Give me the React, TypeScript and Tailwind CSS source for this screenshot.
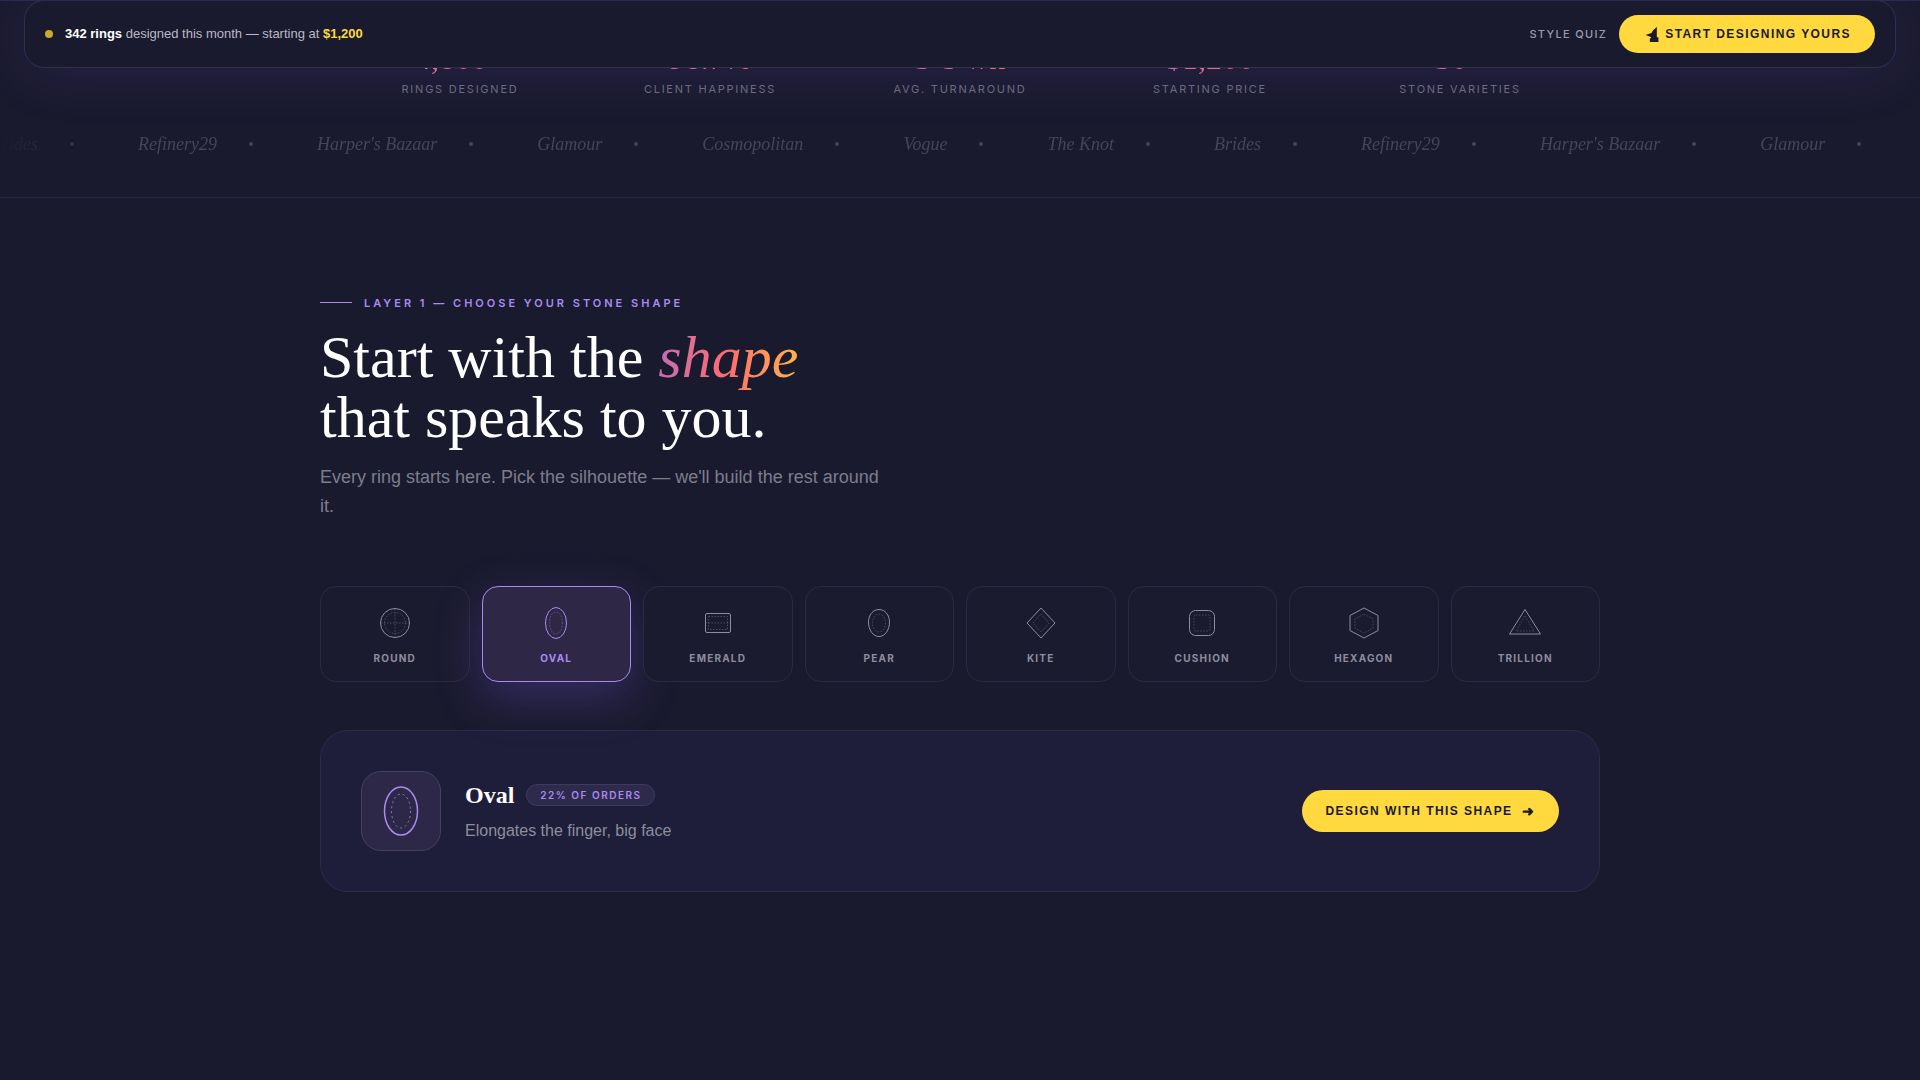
import React from 'react';

const sans = { fontFamily: '"Liberation Sans", Arial, sans-serif' };

const stats = [
  { value: '4,800+', label: 'RINGS DESIGNED' },
  { value: '98.7%', label: 'CLIENT HAPPINESS' },
  { value: '3-5 wk', label: 'AVG. TURNAROUND' },
  { value: '$1,200', label: 'STARTING PRICE' },
  { value: '30+', label: 'STONE VARIETIES' },
];

const press = ['Brides', 'Refinery29', "Harper's Bazaar", 'Glamour', 'Cosmopolitan', 'Vogue', 'The Knot', 'Brides', 'Refinery29', "Harper's Bazaar", 'Glamour'];

function ShapeIcon({ name, active }: { name: string; active: boolean }) {
  const stroke = active ? '#a98bf0' : '#8d8d9e';
  const outer = { fill: 'none', stroke, strokeWidth: 1 };
  const inner = { fill: 'none', stroke, strokeWidth: 0.6, strokeDasharray: '1.5 1.5', opacity: 0.7 };
  return (
    <svg width="40" height="40" viewBox="0 0 40 40">
      {name === 'ROUND' && (
        <>
          <circle cx="20" cy="20" r="14.5" {...outer} />
          <circle cx="20" cy="20" r="10.5" {...inner} />
          <path d="M20 6V34M6 20H34" {...inner} />
        </>
      )}
      {name === 'OVAL' && (
        <>
          <ellipse cx="20" cy="20" rx="10.5" ry="15.5" {...outer} />
          <ellipse cx="20" cy="20" rx="6.5" ry="11" {...inner} />
        </>
      )}
      {name === 'EMERALD' && (
        <>
          <rect x="7.5" y="10.5" width="25" height="19" rx="1.5" {...outer} />
          <rect x="10.5" y="13.5" width="19" height="13" {...inner} />
          <path d="M7.5 20H32.5" {...inner} />
        </>
      )}
      {name === 'PEAR' && (
        <>
          <path d="M20 6.5C26 6.5 30.5 12 30.5 19C30.5 27 26 33.5 20 33.5C14 33.5 9.5 27 9.5 19C9.5 12 14 6.5 20 6.5Z" {...outer} />
          <ellipse cx="20" cy="20" rx="6.5" ry="9" {...inner} />
        </>
      )}
      {name === 'KITE' && (
        <>
          <path d="M20 5L34 20L20 35L6 20Z" {...outer} />
          <path d="M20 11L28 20L20 29L12 20Z" {...inner} />
        </>
      )}
      {name === 'CUSHION' && (
        <>
          <rect x="7.5" y="7.5" width="25" height="25" rx="6" {...outer} />
          <rect x="12" y="12" width="16" height="16" rx="2" {...inner} />
        </>
      )}
      {name === 'HEXAGON' && (
        <>
          <path d="M20 5L34 12.5V27.5L20 35L6 27.5V12.5Z" {...outer} />
          <path d="M20 11L29 16V25L20 30L11 25V16Z" {...inner} />
        </>
      )}
      {name === 'TRILLION' && (
        <>
          <path d="M20 6.5L35.5 31H4.5Z" {...outer} />
          <path d="M20 13L29 28H11Z" {...inner} />
        </>
      )}
    </svg>
  );
}

const shapes = ['ROUND', 'OVAL', 'EMERALD', 'PEAR', 'KITE', 'CUSHION', 'HEXAGON', 'TRILLION'];

export default function App() {
  return (
    <div className="relative h-[1080px] w-full overflow-hidden bg-[#1a1a2e] text-white" style={sans}>
      {/* top nav floats over the scrolled page */}
      <div className="absolute left-0 top-0 z-20 h-px w-full bg-[#2a2a55]" />
      <nav className="absolute left-6 right-6 top-0 z-10 flex h-[68px] items-center justify-between rounded-[20px] border border-[#33304f] bg-[#1a1a2e] pl-5 pr-5 shadow-[0_4px_56px_rgba(124,92,230,0.13)]">
        <div className="flex items-center gap-3 text-[13px] text-[#b9b9c4]">
          <span className="h-2 w-2 rounded-full bg-[#c9ab2e]" />
          <span>
            <b className="font-bold text-white">342 rings</b> designed this month — starting at{' '}
            <b className="font-bold text-[#ffd93d]">$1,200</b>
          </span>
        </div>
        <div className="flex items-center gap-3">
          <span className="text-[11px] font-medium tracking-[0.12em] text-[#9a9aa8]" style={{ fontFamily: 'Inter, sans-serif' }}>
            STYLE QUIZ
          </span>
          <button className="flex h-[38px] items-center gap-[6px] rounded-full bg-[#ffd93d] pl-[26px] pr-6 text-xs font-bold tracking-[0.12em] text-[#1a1a2e]">
            <svg width="14" height="15" viewBox="0 0 12 14" fill="#1a1a2e">
              <path d="M10.5 0V9.5H12V14H4V11L5.5 9.5L0 7.5L5.5 5.5L7 3Z" />
            </svg>
            START DESIGNING YOURS
          </button>
        </div>
      </nav>

      {/* stats row, its values run under the nav */}
      <div className="mx-auto mt-[42px] grid w-[1250px] grid-cols-5">
        {stats.map((s) => (
          <div key={s.label} className="flex flex-col items-center">
            <div
              className="bg-gradient-to-r from-[#d86fa8] to-[#ff6b6b] bg-clip-text text-[32px] leading-none text-transparent"
              style={{ fontFamily: '"Liberation Serif", serif' }}
            >
              {s.value}
            </div>
            <div className="mt-[7px] text-[11px] tracking-[0.16em] text-[#6c6c7d]" style={{ fontFamily: 'Inter, sans-serif' }}>
              {s.label}
            </div>
          </div>
        ))}
      </div>

      {/* press marquee */}
      <div className="mt-[22px] h-[78px] border-b border-[#25253c]">
        <div className="flex items-start overflow-hidden [mask-image:linear-gradient(to_right,transparent,black_6%,black_100%)]">
          <div className="ml-[-9px] flex shrink-0 items-center pt-[10px]">
            {press.map((p, i) => (
              <div key={i} className="flex shrink-0 items-center">
                <span className="text-lg italic text-[#454556]" style={{ fontFamily: '"Liberation Serif", serif' }}>
                  {p}
                </span>
                <span className="ml-8 mr-16 h-1 w-1 rounded-full bg-[#454556]" />
              </div>
            ))}
          </div>
        </div>
      </div>

      <main className="mx-auto w-[1280px] pt-[97px]">
        <div className="flex items-center gap-3">
          <span className="h-px w-8 bg-[#a98bf0]" />
          <span className="text-[11px] font-semibold tracking-[3px] text-[#a98bf0]" style={{ fontFamily: 'Inter, sans-serif' }}>
            LAYER 1 — CHOOSE YOUR STONE SHAPE
          </span>
        </div>
        <h1 className="mt-4 text-[60px] font-normal leading-[60px]" style={{ fontFamily: '"Liberation Serif", serif' }}>
          Start with the{' '}
          <em className="bg-gradient-to-r from-[#c56cb0] via-[#ff6b6b] to-[#ffb347] bg-clip-text italic text-transparent">shape</em>
          <br />
          that speaks to you.
        </h1>
        <p className="mt-4 w-[560px] text-lg leading-[29px] text-[#7d7d8c]">
          Every ring starts here. Pick the silhouette — we'll build the rest around it.
        </p>

        <div className="mt-[65px] grid grid-cols-8 gap-3">
          {shapes.map((name) => {
            const active = name === 'OVAL';
            return (
              <div
                key={name}
                className={
                  active
                    ? 'flex h-24 flex-col items-center rounded-2xl border border-[#a98bf0] bg-[#2e2846] pt-4 shadow-[0_16px_48px_rgba(124,92,230,0.28)]'
                    : 'flex h-24 flex-col items-center rounded-2xl border border-[#2a2a40] bg-[#1b1b2f] pt-4'
                }
              >
                <ShapeIcon name={name} active={active} />
                <span
                  className={active ? 'mt-2 text-[10px] font-bold tracking-[0.12em] text-[#a98bf0]' : 'mt-2 text-[10px] font-bold tracking-[0.12em] text-[#8d8d9e]'}
                  style={{ fontFamily: 'Inter, sans-serif' }}
                >
                  {name}
                </span>
              </div>
            );
          })}
        </div>

        <div className="mt-12 flex h-[162px] items-center justify-between rounded-[28px] border border-[#2d2b4a] bg-[#1e1e3a] px-10">
          <div className="flex items-center gap-6">
            <div className="flex h-20 w-20 items-center justify-center rounded-[20px] border border-[#45405f] bg-[#2e2848]">
              <svg width="40" height="56" viewBox="0 0 40 56" fill="none">
                <ellipse cx="20" cy="28" rx="16.5" ry="24" stroke="#a98bf0" strokeWidth="1.5" />
                <ellipse cx="20" cy="28" rx="9.5" ry="17" stroke="#8d7fb8" strokeWidth="1" strokeDasharray="2 3" />
              </svg>
            </div>
            <div>
              <div className="flex items-center gap-3">
                <span className="text-2xl font-bold text-white" style={{ fontFamily: '"Liberation Serif", serif' }}>
                  Oval
                </span>
                <span
                  className="rounded-full border border-[#3d3a5c] bg-[#2e2a4c] px-[13px] py-[5px] text-[10px] font-semibold leading-none tracking-[0.15em] text-[#a98bf0]"
                  style={{ fontFamily: 'Inter, sans-serif' }}
                >
                  22% OF ORDERS
                </span>
              </div>
              <p className="mt-2 text-base text-[#8d8d9e]">Elongates the finger, big face</p>
            </div>
          </div>
          <button className="flex h-[42px] items-center gap-[9px] rounded-full bg-[#ffd93d] px-6 text-xs font-bold tracking-[0.12em] text-[#1a1a2e]">
            DESIGN WITH THIS SHAPE
            <span className="text-sm leading-none">➜</span>
          </button>
        </div>
      </main>
    </div>
  );
}
